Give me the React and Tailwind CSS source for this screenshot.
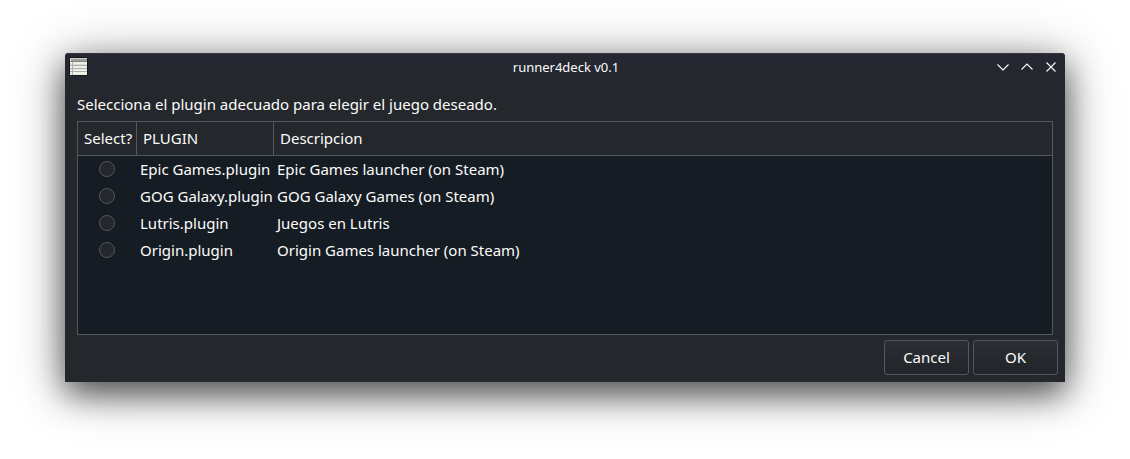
import { useState } from "react";

const plugins = [
  { name: "Epic Games.plugin", description: "Epic Games launcher (on Steam)" },
  { name: "GOG Galaxy.plugin", description: "GOG Galaxy Games (on Steam)" },
  { name: "Lutris.plugin", description: "Juegos en Lutris" },
  { name: "Origin.plugin", description: "Origin Games launcher (on Steam)" },
];

function TableIcon() {
  return (
    <svg width="19" height="19" viewBox="0 0 19 19" shapeRendering="crispEdges" aria-hidden="true">
      <rect width="19" height="19" fill="#15161a" />
      <rect x="1" y="1" width="17" height="17" fill="#efefea" />
      <rect x="1" y="1" width="17" height="1" fill="#cfcfc8" />
      <rect x="2" y="2" width="16" height="2" fill="#a09f9a" />
      <rect x="1" y="4" width="17" height="1" fill="#85857f" />
      <path d="M1 8.5h17M1 11.5h17M1 14.5h17" stroke="#b0b0ab" />
      <path d="M1 7.5h17" stroke="#dcdcd8" />
      <path d="M3.5 5v13" stroke="#b0b0ab" />
    </svg>
  );
}

function WindowButton({ label, path }) {
  return (
    <button type="button" aria-label={label} className="flex size-6 items-center justify-center">
      <svg width="16" height="16" viewBox="0 0 16 16" fill="none" stroke="#fcfcfc" strokeWidth="1.1" aria-hidden="true">
        <path d={path} />
      </svg>
    </button>
  );
}

function DialogButton({ children }) {
  return (
    <button
      type="button"
      className="h-[35px] w-[85px] rounded-[3px] border border-[#54575b] bg-linear-to-b from-[#2b2e32] to-[#212428] pb-[2px]"
    >
      {children}
    </button>
  );
}

export default function App() {
  const [selected, setSelected] = useState(null);

  return (
    <div className="min-h-screen bg-white px-[65px] pt-[53px] pb-[77px] font-['Noto_Sans',sans-serif] text-[15px] leading-5 text-[#fcfcfc]">
      <main className="overflow-hidden rounded-t-[4px] bg-[#24272b] shadow-[0_12px_32px_rgba(0,0,0,0.6),0_6px_56px_rgba(0,0,0,0.3)]">
        <header className="grid h-7 grid-cols-[1fr_auto_1fr] items-center bg-linear-to-b from-[#252832] to-[#24272d] pr-[2px] pb-px pl-1 inset-shadow-[0_1px_0_#33363d]">
          <TableIcon />
          <h1 className="text-[13px]">runner4deck v0.1</h1>
          <div className="flex justify-end">
            <WindowButton label="Minimize" path="M2.5 5.5 8 11l5.5-5.5" />
            <WindowButton label="Maximize" path="M2.5 10.5 8 5l5.5 5.5" />
            <WindowButton label="Close" path="M3.5 3.5l9 9M12.5 3.5l-9 9" />
          </div>
        </header>

        <div className="px-3 pt-[13px]">
          <p className="mb-[7px]">Selecciona el plugin adecuado para elegir el juego deseado.</p>
          <div className="min-h-[214px] border border-[#54575b] bg-[#161c23]">
            <table className="w-full table-fixed border-separate border-spacing-0 text-left">
              <thead className="bg-[#24272b]">
                <tr className="h-[34px]">
                  <th className="w-[59px] border-r border-b border-[#54575b] px-[6px] pb-[2px] font-normal">Select?</th>
                  <th className="w-[137px] border-r border-b border-[#54575b] px-[6px] pb-[2px] font-normal">PLUGIN</th>
                  <th className="border-b border-[#54575b] px-[6px] pb-[2px] font-normal">Descripcion</th>
                </tr>
              </thead>
              <tbody>
                {plugins.map(({ name, description }, index) => (
                  <tr key={name} className="h-[27px]">
                    <td className="pr-px pb-[2px]">
                      <input
                        id={`plugin-${index}`}
                        type="radio"
                        name="plugin"
                        checked={selected === index}
                        onChange={() => setSelected(index)}
                        className="mx-auto block size-4 appearance-none rounded-full border border-[#54575b] bg-[#24272b] checked:bg-[#3daee9]"
                      />
                    </td>
                    <td className="pb-[2px] pl-[3px] whitespace-nowrap">
                      <label htmlFor={`plugin-${index}`}>{name}</label>
                    </td>
                    <td className="pb-[2px] pl-[3px]">{description}</td>
                  </tr>
                ))}
              </tbody>
            </table>
          </div>
        </div>

        <footer className="flex justify-end gap-1 px-[7px] pt-[5px] pb-[7px]">
          <DialogButton>Cancel</DialogButton>
          <DialogButton>OK</DialogButton>
        </footer>
      </main>
    </div>
  );
}
